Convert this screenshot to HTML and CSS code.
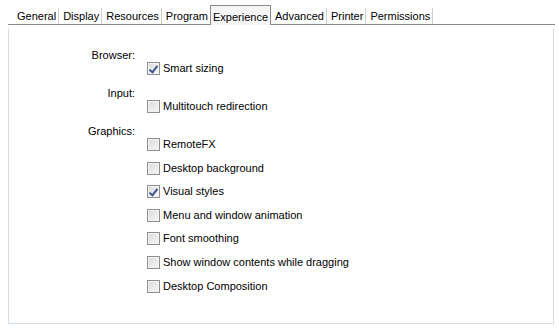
FILE: index.html
```html
<!DOCTYPE html>
<html lang="en">
<head>
    <meta charset="UTF-8">
    <title>Connection Settings</title>
    <link rel="stylesheet" href="styles.css">
</head>
<body>
    <div class="tabs">
        <div class="tab">General</div>
        <div class="tab">Display</div>
        <div class="tab">Resources</div>
        <div class="tab">Program</div>
        <div class="tab active">Experience</div>
        <div class="tab">Advanced</div>
        <div class="tab">Printer</div>
        <div class="tab">Permissions</div>
    </div>
    <div class="panel">
        <div class="group">
            <div class="group-label">Browser:</div>
            <div class="options">
                <label class="option"><span class="box checked"></span>Smart sizing</label>
            </div>
        </div>
        <div class="group">
            <div class="group-label">Input:</div>
            <div class="options">
                <label class="option"><span class="box"></span>Multitouch redirection</label>
            </div>
        </div>
        <div class="group">
            <div class="group-label">Graphics:</div>
            <div class="options">
                <label class="option"><span class="box"></span>RemoteFX</label>
                <label class="option"><span class="box"></span>Desktop background</label>
                <label class="option"><span class="box checked"></span>Visual styles</label>
                <label class="option"><span class="box"></span>Menu and window animation</label>
                <label class="option"><span class="box"></span>Font smoothing</label>
                <label class="option"><span class="box"></span>Show window contents while dragging</label>
                <label class="option"><span class="box"></span>Desktop Composition</label>
            </div>
        </div>
    </div>
</body>
</html>
```
FILE: styles.css
```css
body {
    margin: 0;
    background-color: #ffffff;
    color: #000000;
    font-family: "Liberation Sans", Arial, sans-serif;
    font-size: 11px;
}
.tabs {
    display: flex;
    align-items: flex-end;
    margin: 5px 0 0 8px;
    padding-left: 5px;
    width: 542px;
    height: 19px;
    border-bottom: 1px solid #8a8a8a;
}
.tab {
    height: 16px;
    line-height: 16px;
    padding: 0 2px 0 4px;
    border-right: 1px solid #cfcfcf;
}
.tab.active {
    height: 19px;
    line-height: 22px;
    padding: 0 2px;
    margin-left: -1px;
    margin-bottom: -1px;
    background-color: #f5f5f5;
    border: 1px solid #8a8a8a;
    border-bottom: none;
}
.panel {
    margin: 3px 0 0 8px;
    width: 546px;
    height: 296px;
    padding-top: 20px;
    box-sizing: border-box;
    border: 1px solid #d3dde5;
    border-top-color: #ffffff;
}
.group {
    margin-bottom: 12px;
}
.group-label {
    width: 126px;
    text-align: right;
    line-height: 13px;
}
.options {
    display: flex;
    flex-direction: column;
    gap: 10.6px;
    margin-left: 138px;
}
.option {
    display: flex;
    align-items: center;
    height: 13px;
    line-height: 13px;
}
.box {
    position: relative;
    width: 11px;
    height: 11px;
    margin-right: 3px;
    border: 1px solid #8e8f8f;
    background: linear-gradient(135deg, #dcdcdc, #f6f6f6);
    box-shadow: inset 0 0 0 1px #f4f4f4;
}
.box.checked::after {
    content: "";
    position: absolute;
    left: 3px;
    top: 1px;
    width: 3px;
    height: 7px;
    border: solid #3d5596;
    border-width: 0 2px 2px 0;
    transform: rotate(38deg);
}
```
